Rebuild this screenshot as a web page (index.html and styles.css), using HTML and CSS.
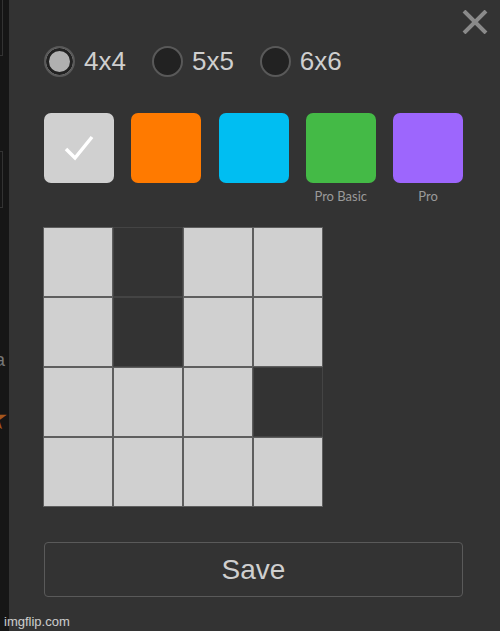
FILE: index.html
```html
<!DOCTYPE html>
<html lang="en">
<head>
    <meta charset="UTF-8">
    <meta name="viewport" content="width=device-width, initial-scale=1.0">
    <title>Grid settings</title>
    <link rel="stylesheet" href="styles.css">
</head>
<body>
    <div class="backdrop">
        <div class="ghost-box top"></div>
        <div class="ghost-box mid"></div>
        <div class="ghost-letter">a</div>
        <div class="ghost-star">★</div>
    </div>

    <div class="panel">
        <button class="close" aria-label="Close">
            <svg width="26" height="24" viewBox="0 0 26 24">
                <path d="M2 1 L24 23 M24 1 L2 23" stroke="#8a8a8a" stroke-width="4" fill="none"></path>
            </svg>
        </button>

        <div class="sizes">
            <label class="size"><span class="radio on"></span>4x4</label>
            <label class="size"><span class="radio"></span>5x5</label>
            <label class="size"><span class="radio"></span>6x6</label>
        </div>

        <div class="swatches">
            <div class="swatch-col">
                <div class="swatch grey">
                    <svg width="34" height="30" viewBox="0 0 34 30">
                        <path d="M4 16 L13 25 L30 4" stroke="#fff" stroke-width="3.5" fill="none"></path>
                    </svg>
                </div>
            </div>
            <div class="swatch-col"><div class="swatch orange"></div></div>
            <div class="swatch-col"><div class="swatch cyan"></div></div>
            <div class="swatch-col"><div class="swatch green"></div><span class="tag">Pro Basic</span></div>
            <div class="swatch-col"><div class="swatch purple"></div><span class="tag">Pro</span></div>
        </div>

        <div class="board">
            <div class="cell"></div><div class="cell off"></div><div class="cell"></div><div class="cell"></div>
            <div class="cell"></div><div class="cell off"></div><div class="cell"></div><div class="cell"></div>
            <div class="cell"></div><div class="cell"></div><div class="cell"></div><div class="cell off"></div>
            <div class="cell"></div><div class="cell"></div><div class="cell"></div><div class="cell"></div>
        </div>

        <button class="save">Save</button>
    </div>

    <div class="watermark">imgflip.com</div>
</body>
</html>
```

FILE: styles.css
```css
body {
    margin: 0;
    height: 631px;
    display: flex;
    background-color: #161616;
    font-family: 'Liberation Sans', Arial, sans-serif;
    overflow: hidden;
    position: relative;
}
.backdrop {
    width: 9px;
    flex-shrink: 0;
    overflow: hidden;
    display: flex;
    flex-direction: column;
}
.ghost-box {
    width: 2px;
    border: 1px solid #333;
    border-left: none;
}
.ghost-box.top {
    height: 56px;
    margin-top: -2px;
}
.ghost-box.mid {
    height: 55px;
    margin-top: 95px;
}
.ghost-letter {
    margin-top: 142px;
    margin-left: -5px;
    color: #777;
    font-size: 18px;
}
.ghost-star {
    margin-top: 28px;
    margin-left: -20px;
    color: #a4571c;
    font-size: 32px;
}
.panel {
    flex: 1;
    position: relative;
    background-color: #333333;
    padding: 46px 37px 0 35px;
}
.close {
    position: absolute;
    top: 10px;
    right: 12px;
    padding: 0;
    border: none;
    background: none;
    line-height: 0;
}
.sizes {
    display: flex;
    align-items: center;
    gap: 26px;
    height: 31px;
}
.size {
    display: flex;
    align-items: center;
    gap: 9px;
    font-size: 26px;
    color: #cfcfcf;
}
.radio {
    box-sizing: border-box;
    width: 31px;
    height: 31px;
    border-radius: 50%;
    border: 2px solid #595959;
    background-color: #222;
}
.radio.on {
    background-color: #b0b0b0;
    box-shadow: inset 0 0 0 3px #222;
}
.swatches {
    display: flex;
    gap: 17.25px;
    margin-top: 36px;
}
.swatch-col {
    width: 70px;
    display: flex;
    flex-direction: column;
    align-items: center;
}
.swatch {
    width: 70px;
    height: 70px;
    border-radius: 7px;
    display: flex;
    align-items: center;
    justify-content: center;
}
.swatch.grey { background-color: #d0d0d0; }
.swatch.orange { background-color: #ff7a00; }
.swatch.cyan { background-color: #00bef2; }
.swatch.green { background-color: #44ba46; }
.swatch.purple { background-color: #9d66fd; }
.tag {
    margin-top: 5px;
    font-family: 'Lato', sans-serif;
    font-size: 13px;
    line-height: 16px;
    color: #9a9a9a;
    white-space: nowrap;
}
.board {
    display: grid;
    grid-template-columns: repeat(4, 70px);
    grid-auto-rows: 70px;
    width: 280px;
    margin-top: 23px;
    margin-left: -1px;
}
.cell {
    background-color: #d0d0d0;
    border: 1px solid #5e5e5e;
}
.cell.off {
    background-color: #333;
    border-color: #444;
}
.save {
    display: block;
    width: 419px;
    height: 55px;
    margin-top: 35px;
    border: 1px solid #5a5a5a;
    border-radius: 4px;
    background: transparent;
    color: #cfcfcf;
    font-family: 'Liberation Sans', Arial, sans-serif;
    font-size: 28px;
}
.watermark {
    position: absolute;
    left: 4px;
    bottom: 2px;
    font-family: 'Liberation Sans', Arial, sans-serif;
    font-size: 13px;
    color: #e8e8e8;
    opacity: 0.85;
}
```
